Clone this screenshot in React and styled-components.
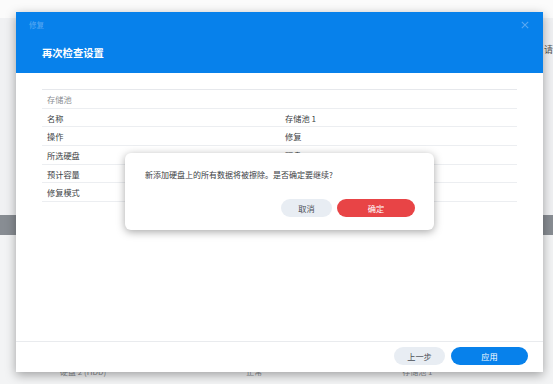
import React from "react";
import styled, { createGlobalStyle } from "styled-components";

const Global = createGlobalStyle`
  html, body { margin: 0; padding: 0; }
  body {
    width: 553px; height: 384px; overflow: hidden;
    font-family: "Noto Sans CJK SC", "Noto Sans", sans-serif;
    background: #f1f2f4;
  }
  * { box-sizing: border-box; }
`;

const Page = styled.div`
  position: relative;
  width: 553px;
  height: 384px;
  overflow: hidden;
  display: flex;
  flex-direction: column;
`;

const TopStrip = styled.div`
  height: 18px;
  background: #fbfbfb;
`;

const BackContent = styled.div`
  height: 197px;
  background: #f0f1f3;
  display: flex;
  justify-content: flex-end;
  padding-top: 26px;
`;

const BackHint = styled.span`
  font-size: 9px;
  color: #555;
  margin-right: 0;
  line-height: 12px;
`;

const GrayBand = styled.div`
  height: 20px;
  background: #888d93;
`;

const BackLower = styled.div`
  flex: 1;
  background: #f3f4f5;
  display: flex;
  align-items: flex-end;
  padding: 0 0 8px 60px;
  gap: 140px;
`;

const BackText = styled.span`
  font-size: 8px;
  color: #8a8d92;
  line-height: 9px;
`;

const Window = styled.div`
  position: absolute;
  left: 16px;
  top: 12px;
  width: 527px;
  height: 360px;
  background: #fff;
  box-shadow: 0 3px 10px rgba(0, 0, 0, 0.35);
  display: flex;
  flex-direction: column;
`;

const Header = styled.div`
  height: 61px;
  background: #0781eb;
  display: flex;
  flex-direction: column;
  padding: 7px 13px 0 13px;
`;

const HeaderTop = styled.div`
  display: flex;
  justify-content: space-between;
  align-items: center;
  height: 12px;
`;

const SmallTitle = styled.span`
  font-size: 7.5px;
  color: #5ba9f2;
  line-height: 10px;
`;

const Close = styled.svg`
  width: 8px;
  height: 8px;
  margin-right: 1px;
`;

const BigTitle = styled.div`
  margin-top: 15px;
  padding-left: 13px;
  font-size: 10.3px;
  font-weight: 700;
  color: #fff;
  line-height: 14px;
`;

const Body = styled.div`
  flex: 1;
  padding: 16px 26px 0 26px;
`;

const Table = styled.div`
  border-top: 1px solid #e6e8ec;
  display: flex;
  flex-direction: column;
`;

const Row = styled.div`
  height: 18.7px;
  border-bottom: 1px solid #eceef1;
  display: grid;
  grid-template-columns: 238px 1fr;
  align-items: center;
  padding-left: 5px;
  font-size: 8.2px;
  color: ${(p) => (p.$section ? "#8a8d92" : "#3b3e43")};
`;

const Footer = styled.div`
  height: 31px;
  border-top: 1px solid #e9ebee;
  display: flex;
  justify-content: flex-end;
  align-items: flex-start;
  gap: 6px;
  padding: 5px 15px 0 0;
`;

const Btn = styled.button`
  width: ${(p) => p.$w}px;
  height: 18px;
  border: none;
  border-radius: 9px;
  font-family: inherit;
  font-size: 8.2px;
  padding: 0;
  cursor: pointer;
  background: ${(p) =>
    p.$kind === "primary" ? "#0781eb" : p.$kind === "danger" ? "#e84446" : "#e8edf3"};
  color: ${(p) => (p.$kind ? "#fff" : "#4a4f56")};
`;

const Confirm = styled.div`
  position: absolute;
  left: 125px;
  top: 153px;
  width: 309px;
  height: 77px;
  background: #fff;
  border-radius: 6px;
  box-shadow: 0 2px 8px rgba(0, 0, 0, 0.35);
  display: flex;
  flex-direction: column;
  justify-content: space-between;
  padding: 16px 19px 13px 20px;
`;

const ConfirmText = styled.div`
  font-size: 8px;
  color: #3b3e43;
  line-height: 12px;
`;

const ConfirmActions = styled.div`
  display: flex;
  justify-content: flex-end;
  gap: 5px;
`;

const rows = [
  ["名称", "存储池 1"],
  ["操作", "修复"],
  ["所选硬盘", "硬盘 2"],
  ["预计容量", ""],
  ["修复模式", ""],
];

export default function App() {
  return (
    <>
      <Global />
      <Page>
        <TopStrip />
        <BackContent>
          <BackHint>请</BackHint>
        </BackContent>
        <GrayBand />
        <BackLower>
          <BackText>硬盘 2 (HDD)</BackText>
          <BackText>正常</BackText>
          <BackText>存储池 1</BackText>
        </BackLower>

        <Window>
          <Header>
            <HeaderTop>
              <SmallTitle>修复</SmallTitle>
              <Close viewBox="0 0 10 10">
                <path d="M1 1 L9 9 M9 1 L1 9" stroke="#5ba9f2" strokeWidth="1.3" />
              </Close>
            </HeaderTop>
            <BigTitle>再次检查设置</BigTitle>
          </Header>
          <Body>
            <Table>
              <Row $section>
                <span>存储池</span>
                <span />
              </Row>
              {rows.map(([k, v]) => (
                <Row key={k}>
                  <span>{k}</span>
                  <span>{v}</span>
                </Row>
              ))}
            </Table>
          </Body>
          <Footer>
            <Btn $w={51}>上一步</Btn>
            <Btn $w={77} $kind="primary">应用</Btn>
          </Footer>
        </Window>

        <Confirm>
          <ConfirmText>新添加硬盘上的所有数据将被擦除。是否确定要继续?</ConfirmText>
          <ConfirmActions>
            <Btn $w={51}>取消</Btn>
            <Btn $w={78} $kind="danger">确定</Btn>
          </ConfirmActions>
        </Confirm>
      </Page>
    </>
  );
}
